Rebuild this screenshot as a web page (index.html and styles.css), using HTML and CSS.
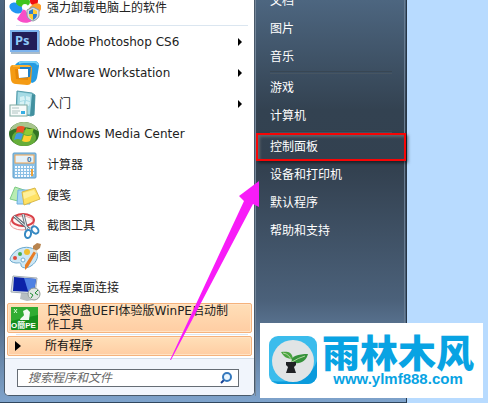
FILE: index.html
```html
<!DOCTYPE html>
<html lang="zh-CN">
  <head>
    <meta charset="UTF-8" />
    <meta name="viewport" content="width=device-width, initial-scale=1.0" />
    <title>开始菜单</title>
    <link rel="stylesheet" href="styles.css">
  </head>
  <body>
    <div class="desktop">
      <div class="start-menu">
        <div class="programs">
          <a class="program pinned" href="#">
            <svg class="icon" viewBox="0 0 32 30">
              <ellipse cx="7" cy="15" rx="7" ry="5" fill="#2196f3" transform="rotate(30 7 15)" />
              <ellipse cx="14" cy="9" rx="7" ry="5" fill="#3fc51f" />
              <circle cx="25" cy="8" r="4" fill="#f01010" />
              <ellipse cx="26" cy="16" rx="7" ry="5" fill="#ff9f2e" transform="rotate(-35 26 16)" />
              <path d="M15 15l8 13c-5 3-12 2-15-2z" fill="#f84fc8" />
              <circle cx="16" cy="14" r="3" fill="#fff" />
              <path d="M18 17l6-3 6 3v5c0 3-3 5-6 6-3-1-6-3-6-6z" fill="#d9dde0" stroke="#8b9aa5" />
              <path d="M20 18l4-2v5h-4zM24 21h4c0 3-1 4-4 6z" fill="#2d7fd0" />
              <path d="M24 16l4 2v3h-4zM20 21h4v6c-3-2-4-3-4-6z" fill="#ffcf32" />
            </svg>
            <span>强力卸载电脑上的软件</span>
          </a>
          <hr class="divider">
          <ul class="program-list">
            <li><a class="program" href="#">
              <svg class="icon" viewBox="0 0 32 30">
                <rect x="2" y="4" width="29" height="23" fill="#a9bccb" />
                <rect x="1" y="3" width="29" height="22" fill="#7db4ee" />
                <rect x="3" y="5" width="25" height="18" fill="#221e58" />
                <text x="6" y="18" class="ps-text">Ps</text>
              </svg>
              <span>Adobe Photoshop CS6</span>
              <i class="arrow"></i>
            </a></li>
            <li><a class="program" href="#">
              <svg class="icon" viewBox="0 0 32 30">
                <path d="M6 7q3-4 8-4h11q5 0 5 5l-2 12q-1 4-5 5l-3-2V8z" fill="#249be2" />
                <path d="M10 5q2-1 5-1h10q3 0 4 3" fill="none" stroke="#74d0f8" stroke-width="2" />
                <path d="M4 7h15q4 0 4 4l-1 13q0 3-4 3l-11-1q-4 0-5-4L1 11q0-4 3-4z" fill="#f49b14" />
                <path d="M4 8h15q2 0 3 3" fill="none" stroke="#ffc64e" />
                <path d="M6 11h13v11l-12-1z" fill="#e58708" />
                <path d="M11 9h11l-1 10-10 1z" fill="#1b80c9" />
                <path d="M9 11h10v8l-9 1z" fill="#fff" />
              </svg>
              <span>VMware Workstation</span>
              <i class="arrow"></i>
            </a></li>
            <li><a class="program" href="#">
              <svg class="icon" viewBox="0 0 32 30">
                <path d="M8 2l15 2 3 2-1 20-3 1L7 24z" fill="#78bfcd" stroke="#579dab" />
                <path d="M9 3l14 2-2 20H8z" fill="#a6dbe5" />
                <path d="M23 5l3 1-1 20-4 1z" fill="#42909f" />
                <path d="M11 8l4-1 1 4-5 1zM17 7l4 1v4l-4-1zM11 13l4-1v4l-5 1zM17 12l4 1-1 4-4-1z" fill="#d7f2f5" />
                <rect x="1" y="16" width="17" height="11" fill="#f7fbfa" stroke="#80a9a0" />
                <path d="M3 19h7M3 22h8M3 24h6" stroke="#aec3c1" />
                <rect x="12" y="22" width="4" height="3" fill="#35aee4" />
              </svg>
              <span>入门</span>
              <i class="arrow"></i>
            </a></li>
            <li><a class="program" href="#">
              <svg class="icon" viewBox="0 0 32 30">
                <ellipse cx="15" cy="15" rx="15" ry="12" fill="#347424" />
                <ellipse cx="15" cy="19" rx="12" ry="8" fill="#66ad39" />
                <path d="M1 12C4 0 26 0 29 12 20 7 10 7 1 12z" fill="#a9c58e" />
                <path d="M8 8q4-2 8 0l-2 6q-4-2-7 0z" fill="#ee5127" />
                <path d="M17 9q3 2 8 0l-2 6q-4 2-8 0z" fill="#8fcb36" />
                <path d="M7 15q3-2 7 0l-2 6q-3-2-7 0z" fill="#419be1" />
                <path d="M15 16q4 2 8 0l-2 6q-4 2-8 0z" fill="#ffd02f" />
              </svg>
              <span>Windows Media Center</span>
            </a></li>
            <li><a class="program" href="#">
              <svg class="icon" viewBox="0 0 32 30">
                <rect x="4" y="3" width="23" height="25" rx="1" fill="#8bc0e5" stroke="#5d9ecb" />
                <rect x="6" y="5" width="19" height="8" fill="#e5f2fa" stroke="#f3a34e" />
                <text x="18" y="12" class="calc-text">0</text>
                <path d="M6 17h19M6 20h19M6 23h19M6 26h16" stroke="#f5faff" stroke-width="2" stroke-dasharray="2 1" />
                <path d="M23 19v7" stroke="#e9a23b" stroke-width="2" />
              </svg>
              <span>计算器</span>
            </a></li>
            <li><a class="program" href="#">
              <svg class="icon" viewBox="0 0 32 30">
                <path d="M6 6l12 4-5 11L1 18z" fill="#b9ecb3" stroke="#7dcb83" />
                <path d="M9 9l12 0 0 14-13 0z" fill="#a6d6f6" stroke="#6fb1e0" />
                <path d="M13 11l13-4 5 11-16 6z" fill="#ffe264" stroke="#d9b84a" />
                <path d="M14 12l11-3 2 4-12 5z" fill="#fff09a" />
              </svg>
              <span>便笺</span>
            </a></li>
            <li><a class="program" href="#">
              <svg class="icon" viewBox="0 0 32 30">
                <ellipse cx="13" cy="12" rx="12" ry="7" fill="#fff6f5" stroke="#ef9a98" />
                <ellipse cx="14" cy="9" rx="11" ry="6" fill="none" stroke="#da4148" stroke-width="2" />
                <path d="M5 5l15 13M14 3l4 16" stroke="#69777f" stroke-width="3" />
                <path d="M5 5l15 13M14 3l4 16" stroke="#eef2f4" />
                <ellipse cx="19" cy="23" rx="3" ry="4" fill="none" stroke="#3588c2" stroke-width="2" transform="rotate(12 19 23)" />
                <ellipse cx="26" cy="19" rx="3" ry="4" fill="none" stroke="#3588c2" stroke-width="2" transform="rotate(-40 26 19)" />
              </svg>
              <span>截图工具</span>
            </a></li>
            <li><a class="program" href="#">
              <svg class="icon" viewBox="0 0 32 30">
                <path d="M3 13C8 5 20 3 26 8c5 5 2 12-4 16-5 3-10 2-10-1 0-3-2-2-5-2-7-1-7-4-4-8z" fill="#cde7f5" stroke="#6ba9ce" />
                <circle cx="6" cy="16" r="2" fill="#df4b3c" />
                <circle cx="11" cy="12" r="2" fill="#48ad52" />
                <circle cx="18" cy="10" r="3" fill="#f0bf2f" />
                <circle cx="14" cy="18" r="2" fill="#fff" stroke="#73accb" />
                <path d="M25 9l2 2-8 14-3 3v-5z" fill="#e77d25" />
                <path d="M24 4l4-3 4 1-1 4-4 3-3-1z" fill="#b88450" />
                <path d="M24 8l4 2" stroke="#e6e1cf" stroke-width="2" />
              </svg>
              <span>画图</span>
            </a></li>
            <li><a class="program" href="#">
              <svg class="icon" viewBox="0 0 32 30">
                <path d="M12 20l7-1 1 6 4 2-6 1-7-2z" fill="#b7bec2" />
                <path d="M4 3l24 2-2 16L2 19z" fill="#d9e0e4" stroke="#a3adb4" />
                <path d="M5 4l22 2-2 13-21-1z" fill="#0b22a8" />
                <path d="M15 5l12 1-2 13-6-1z" fill="#4e81e3" />
                <circle cx="25" cy="21" r="6" fill="#e1e6e3" stroke="#929c98" />
                <path d="M21 20l3 2-2 3M29 17l-3 3 3 2" fill="none" stroke="#218c35" />
              </svg>
              <span>远程桌面连接</span>
            </a></li>
          </ul>
          <a class="program highlight" href="#">
            <svg class="icon" viewBox="0 0 32 30">
              <rect x="2" y="4" width="27" height="23" rx="1" fill="#16901d" />
              <path d="M2 4h27v8L2 18z" fill="#31ac32" />
              <path d="M5 6l3 4M8 6l-3 4" stroke="#d7ffd0" />
              <path d="M11 17c1-3 3-3 4-5l-1-4 4-2 3 3-1 8z" fill="#f3faf1" />
              <text x="2" y="25" class="pe-text">O簡PE</text>
            </svg>
            <span>口袋U盘UEFI体验版WinPE启动制作工具</span>
          </a>
          <hr class="divider">
          <a class="all-programs highlight" href="#"><i class="arrow"></i><span>所有程序</span></a>
          <form class="search-container">
            <div class="search-box">
              <input type="text" class="search-input" aria-label="搜索程序和文件" placeholder="搜索程序和文件" />
              <button class="search-btn" type="button" aria-label="搜索">
                <svg viewBox="0 0 14 14">
                  <path d="M6 8l-4 4" stroke="#173f94" stroke-width="2" />
                  <circle cx="8" cy="6" r="4" fill="#e9f6ff" stroke="#3478bd" stroke-width="2" />
                </svg>
              </button>
            </div>
          </form>
        </div>
        <nav class="places">
          <a href="#">文档</a>
          <a href="#">图片</a>
          <a href="#">音乐</a>
          <hr>
          <a href="#">游戏</a>
          <a href="#">计算机</a>
          <hr>
          <a class="marked" href="#">控制面板</a>
          <a href="#">设备和打印机</a>
          <a href="#">默认程序</a>
          <a href="#">帮助和支持</a>
        </nav>
      </div>

      <svg class="pointer" viewBox="0 0 90 180">
        <path d="M1 180L75 21 70 16 90 1v26l-6-3L2 180z" fill="#f81cf8" />
      </svg>

      <div class="watermark">
        <svg class="brand-logo" viewBox="0 0 48 48">
          <rect width="48" height="48" rx="9" fill="#3bbcec" />
          <path d="M48 25v14a9 9 0 0 1-9 9H9l-6-3c24 3 40-5 45-20z" fill="#0b9bdc" />
          <circle cx="24" cy="25" r="21" fill="#e1e4e5" />
          <path d="M12 16c7-1 11 0 12 7-6 0-9-2-12-7z" fill="#4aa440" />
          <path d="M22 26c0-6 7-8 17-8-2 8-9 11-17 8z" fill="#36923b" />
          <path d="M14 17q7 1 9 9 6-4 13-6" fill="none" stroke="#b4d6a3" />
          <path d="M17 26h10v3l-2 2 2 6H17l2-6-2-2z" fill="#202225" />
        </svg>
        <div class="brand-text">
          <strong>雨林木风</strong>
          <span>www.ylmf888.com</span>
        </div>
      </div>
    </div>
  </body>
</html>
```
FILE: styles.css
```css
* {
  box-sizing: border-box;
}

body {
  margin: 0;
  font-family: "DejaVu Sans", "Noto Sans CJK SC", sans-serif;
  font-size: 12px;
  line-height: 14px;
  background-color: #b8dbff;
  overflow: hidden;
}

a {
  color: inherit;
  text-decoration: none;
}

hr {
  margin: 0;
  border: 0;
}

.desktop {
  position: relative;
  padding-right: 81px;
}

.start-menu {
  display: flex;
  padding: 0 1px 6px 4px;
  background: linear-gradient(#4d6680 0, #334251 110px, #334150 170px, #4b617a 300px, #7ea3cc 100%);
  border-right: 1px solid #273646;
  border-bottom: 1px solid #30475f;
}

.programs {
  flex: 1;
  background-color: white;
  border: 1px solid #49596a;
  border-top: 0;
  border-radius: 0 0 5px 5px;
  color: #222;
}

.program {
  display: flex;
  align-items: center;
  gap: 6px;
  height: 100%;
  padding: 0 8px 0 4px;
}

.program.pinned {
  height: 32px;
  margin-top: -8px;
}

.icon {
  flex: none;
  width: 32px;
  height: 30px;
}

.arrow {
  margin-left: auto;
  margin-right: 4px;
  border: 4px solid transparent;
  border-left: 4px solid black;
  border-right: 0;
}

.divider {
  height: 1px;
  margin: 1px 6px 1px 11px;
  background-color: #dbe6f0;
}

.program-list {
  display: grid;
  grid-auto-rows: 1fr;
  height: 276px;
  margin: 0;
  padding: 0;
  list-style: none;
}

.highlight {
  margin: 0 2px;
  border: 1px solid #f5b27c;
  border-radius: 2px;
  box-shadow: inset 0 0 0 1px #ffe3c5;
  background: linear-gradient(#ffdfb8, #ffcda3);
}

.program.highlight {
  height: 30px;
  padding: 0 20px 0 1px;
}

.all-programs {
  display: flex;
  align-items: center;
  height: 20px;
  padding-left: 7px;
  color: #111;
}

.all-programs .arrow {
  margin: 0 24px 0 0;
  border-width: 5px 0 5px 6px;
}

.search-container {
  margin-top: 2px;
  padding: 10px 15px 8px 12px;
  border-top: 1px solid #d3deea;
  border-radius: 0 0 4px 4px;
  background-color: #f1f5fc;
}

.search-box {
  display: flex;
  align-items: center;
  height: 18px;
  border: 1px solid #666d75;
  background-color: white;
}

.search-input {
  flex: 1;
  min-width: 0;
  padding: 0 10px;
  border: 0;
  outline: 0;
  background: none;
  font: inherit;
}

.search-input::placeholder {
  color: #666;
  font-style: italic;
}

.search-btn {
  width: 14px;
  height: 14px;
  margin-right: 5px;
  padding: 0;
  border: 0;
  background: none;
}

.search-btn svg {
  display: block;
}

.places {
  width: 150px;
  margin-top: -13px;
  border-left: 1px solid #75879a;
  border-right: 1px solid #687c91;
  color: white;
}

.places a {
  display: block;
  height: 28px;
  padding: 7px 14px;
}

.places hr {
  height: 3px;
  margin: 0 12px 0 14px;
  border-top: 1px solid #384653;
  border-bottom: 1px solid #465562;
}

.places .marked {
  margin: 0 -2px 0 0;
  padding: 5px 12px;
  border: 2px solid #f80505;
  box-shadow: 2px 2px 3px rgba(0, 0, 0, 0.5), inset 2px 2px 3px rgba(140, 140, 140, 0.5);
}

.pointer {
  position: absolute;
  left: 169px;
  top: 180px;
  width: 90px;
  height: 180px;
}

.watermark {
  position: absolute;
  right: 5px;
  bottom: 5px;
  display: flex;
  align-items: center;
  gap: 5px;
  height: 75px;
  padding: 0 9px 2px;
  background-color: white;
  color: #08a3e3;
}

.brand-logo {
  width: 48px;
  height: 48px;
}

.brand-text {
  display: flex;
  flex-direction: column;
  align-items: center;
}

.brand-text strong {
  font-family: "Noto Sans CJK SC", sans-serif;
  font-size: 38px;
  font-weight: 900;
  line-height: 38px;
}

.brand-text span {
  font-family: "Liberation Sans", sans-serif;
  font-size: 15px;
  font-weight: bold;
  line-height: 18px;
}

.ps-text {
  font: bold 13px "Noto Sans", sans-serif;
  fill: #8fc8fa;
}

.calc-text {
  font: bold 8px "Liberation Sans", sans-serif;
  fill: #426f97;
}

.pe-text {
  font: bold 8px "Liberation Sans", "Noto Sans CJK SC", sans-serif;
  fill: white;
}
```
